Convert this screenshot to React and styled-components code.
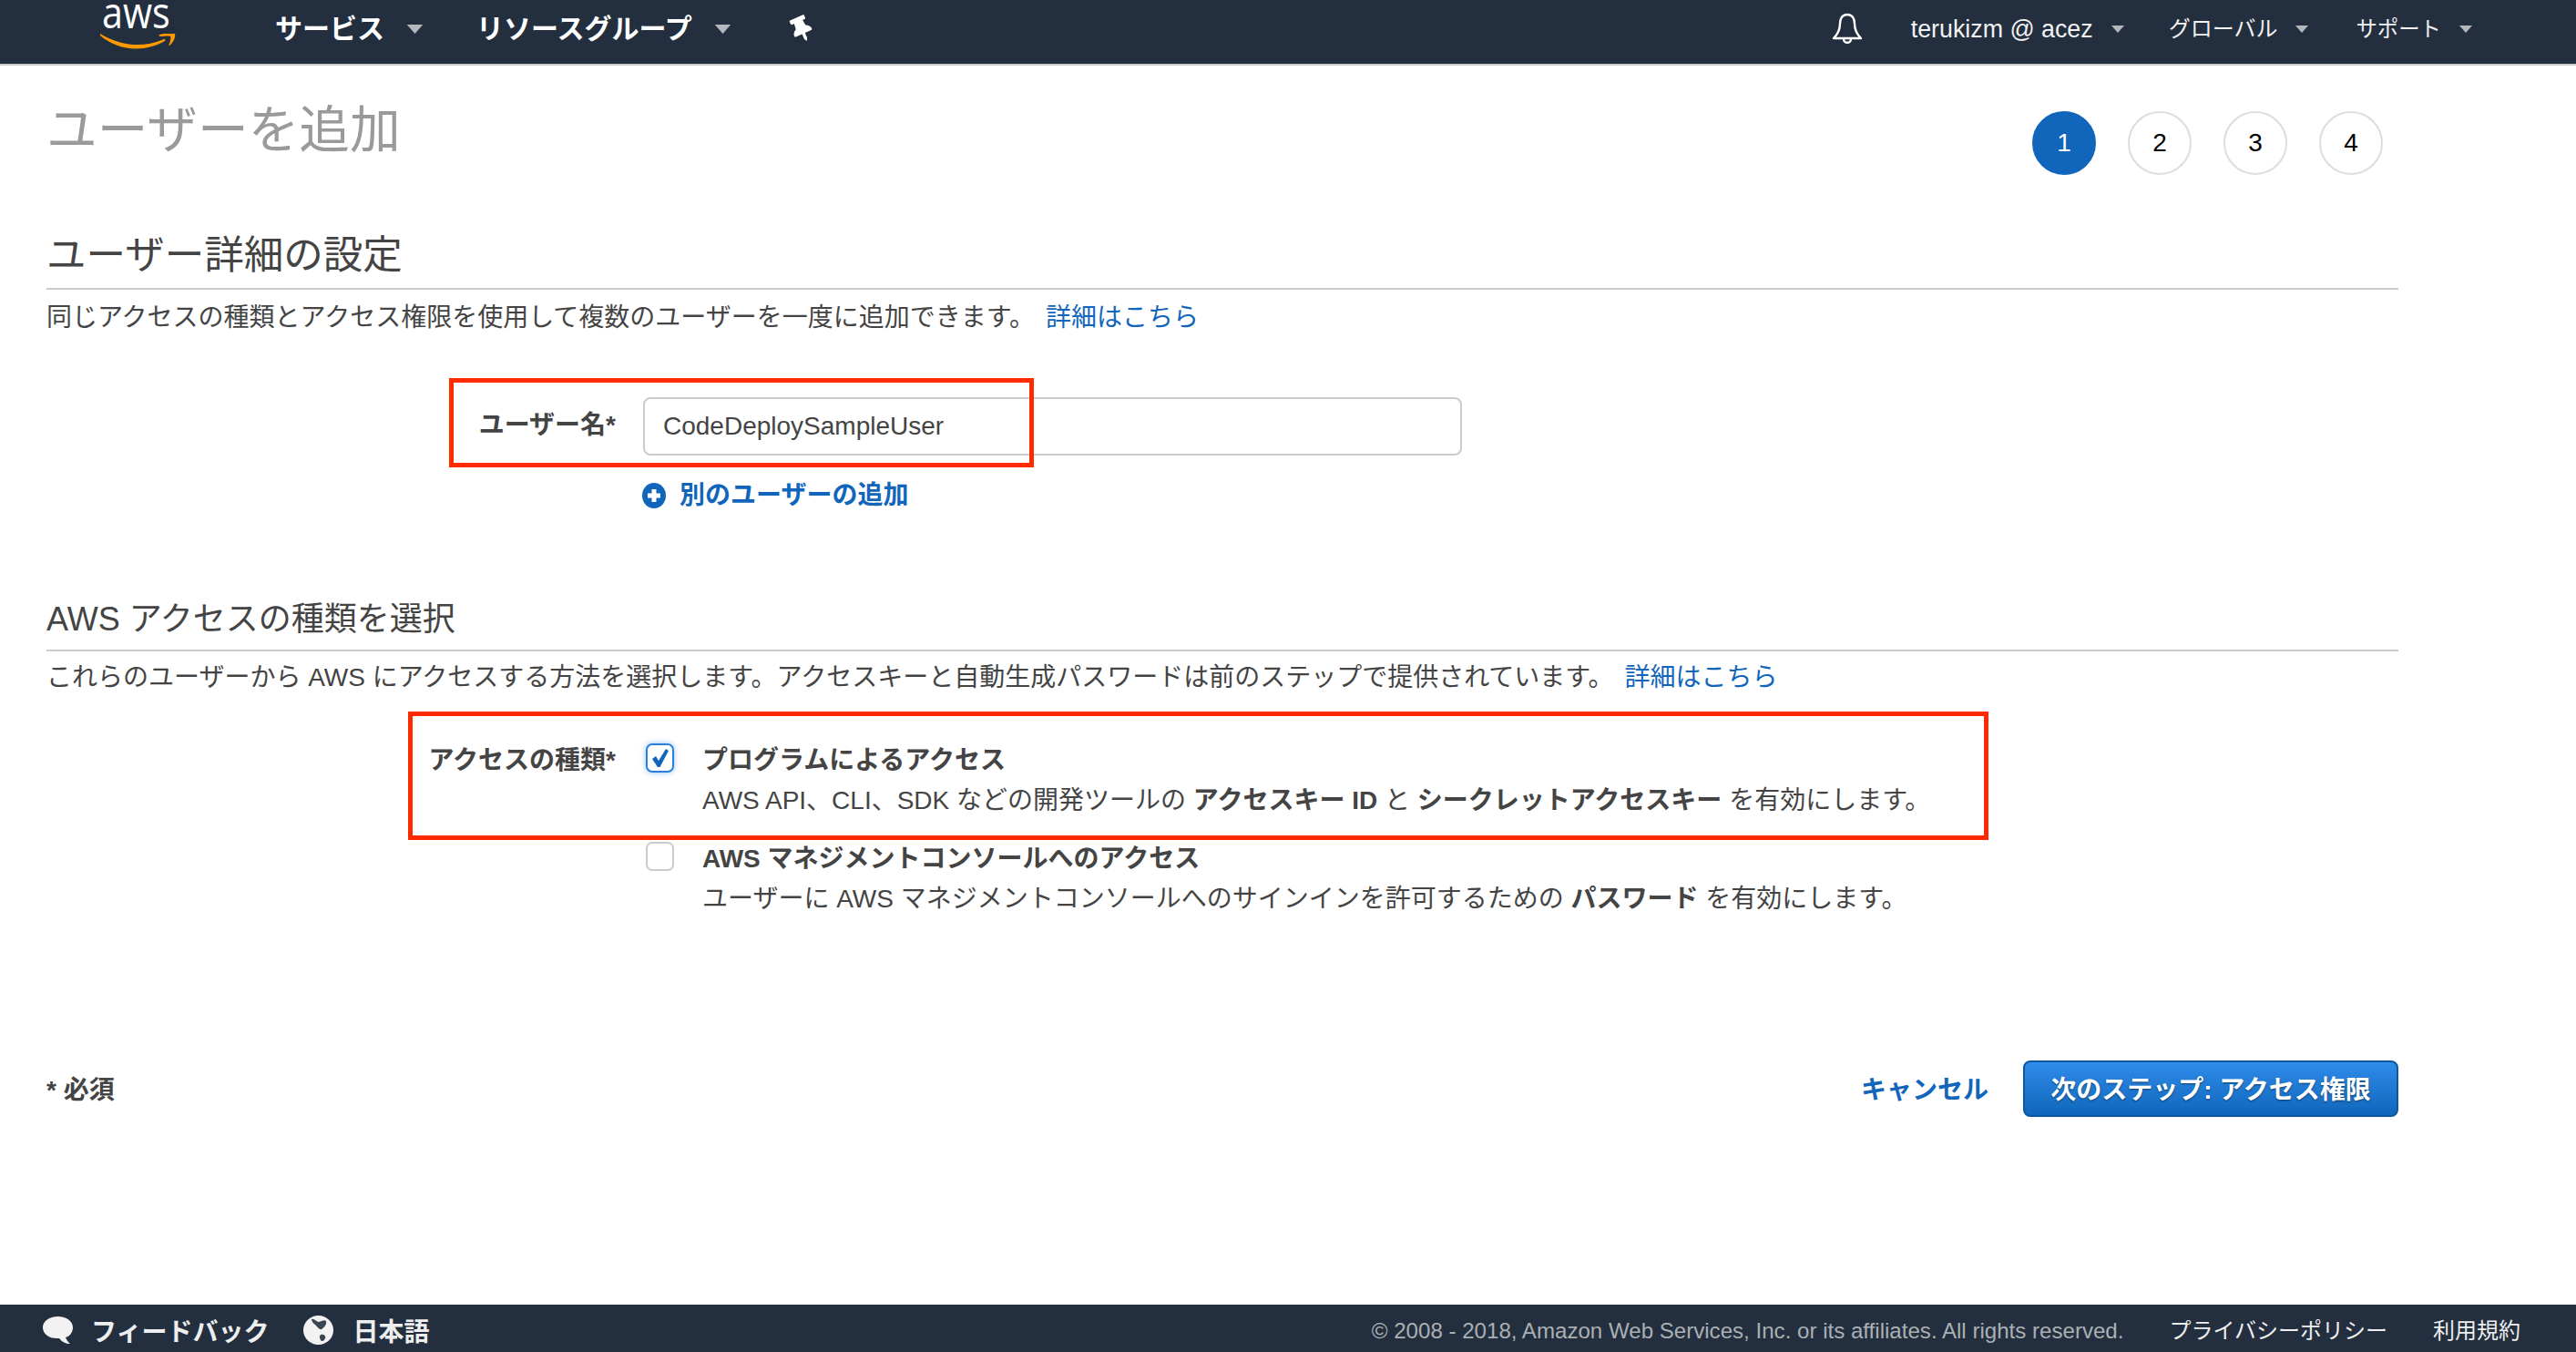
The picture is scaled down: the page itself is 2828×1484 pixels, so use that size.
import styled, { createGlobalStyle } from "styled-components";
import { FaThumbtack } from "react-icons/fa";

const GlobalStyle = createGlobalStyle`
    html, body {
        margin: 0;
        padding: 0;
        background: #fff;
    }
    body {
        font-family: "Liberation Sans", "Noto Sans CJK JP", sans-serif;
        color: #444;
    }
    * {
        box-sizing: border-box;
    }
`;

const Page = styled.div`
    display: flex;
    flex-direction: column;
    height: 1484px;
    width: 2828px;
    overflow: hidden;
`;

/* top navigation */
const NavBar = styled.header`
    display: flex;
    align-items: center;
    flex: 0 0 72px;
    height: 72px;
    padding: 0 0 6px 110px;
    background: #232f3e;
    border-bottom: 2px solid #ccc;
    color: #fff;
`;

const Logo = styled.div`
    display: flex;
    flex-direction: column;
    align-self: flex-start;
    flex: none;
    width: 84px;
    height: 70px;
    margin-right: 108px;
`;

const Wordmark = styled.span`
    display: block;
    margin-left: 2px;
    font-family: "Open Sans", sans-serif;
    font-size: 47px;
    line-height: 26px;
    color: #fff;
    transform: scaleX(0.88);
    transform-origin: left center;
`;

const Smile = styled.svg`
    display: block;
    width: 84px;
    height: 17px;
    margin-top: 11px;
`;

const MainMenu = styled.a`
    display: flex;
    align-items: center;
    gap: 24px;
    margin-right: 58px;
    font-size: 30px;
    font-weight: 700;
    line-height: 40px;
    white-space: nowrap;
`;

const Pin = styled(FaThumbtack)`
    width: 26px;
    height: 28px;
    margin-left: 6px;
    color: #fff;
    transform: rotate(-24deg);
`;

const NavRight = styled.div`
    display: flex;
    align-items: center;
    margin-left: auto;
    padding-right: 114px;
`;

const Bell = styled.svg`
    width: 34px;
    height: 36px;
    margin-right: 53px;
`;

const SideMenu = styled.a`
    display: flex;
    align-items: center;
    gap: 20px;
    margin-right: ${(p) => p.$after ?? 52}px;
    font-size: ${(p) => p.$size}px;
    line-height: 36px;
    white-space: nowrap;
    color: #f2f2f2;

    &:last-child {
        margin-right: 0;
    }
`;

const Caret = styled.svg`
    width: ${(p) => p.$w}px;
    height: ${(p) => p.$h}px;
    flex: none;
`;

/* content */
const Main = styled.main`
    display: flex;
    flex-direction: column;
    flex: 1;
    padding: 0 195px 206px 51px;
`;

const TitleRow = styled.div`
    display: flex;
    justify-content: space-between;
    height: 120px;
`;

const PageTitle = styled.h1`
    margin: 41px 0 0;
    font-size: 55.7px;
    font-weight: 400;
    line-height: 60px;
    color: #9a9a9a;
`;

const Stepper = styled.ol`
    display: flex;
    gap: 35px;
    list-style: none;
    margin: 50px 17px 0 0;
    padding: 0;
`;

const Step = styled.li`
    display: flex;
    align-items: center;
    justify-content: center;
    width: 70px;
    height: 70px;
    border-radius: 50%;
    border: 2px solid ${(p) => (p.$active ? "#1166bb" : "#ddd")};
    background: ${(p) => (p.$active ? "#1166bb" : "#fff")};
    color: ${(p) => (p.$active ? "#fff" : "#000")};
    font-size: 28px;
`;

const SectionHeading = styled.h2`
    margin: ${(p) => p.$top}px 0 0;
    padding-bottom: ${(p) => p.$pad}px;
    border-bottom: 2px solid #ccc;
    font-size: ${(p) => p.$size}px;
    font-weight: 400;
    line-height: 44px;
    color: #444;
`;

const Description = styled.p`
    margin: ${(p) => p.$top}px 0 0;
    font-size: 28px;
    line-height: 40px;
    white-space: nowrap;
`;

const TextLink = styled.a`
    color: #1166bb;
    margin-left: 12px;
`;

const FormRow = styled.div`
    position: relative;
    display: grid;
    grid-template-columns: 625px 1fr;
    column-gap: 30px;
    margin-top: ${(p) => p.$top}px;
`;

const FieldLabel = styled.label`
    font-size: 28px;
    font-weight: 700;
    line-height: 40px;
    text-align: right;
    white-space: nowrap;
    margin-top: ${(p) => p.$top}px;
`;

const TextInput = styled.input`
    width: 899px;
    height: 64px;
    padding: 0 20px;
    border: 2px solid #ccc;
    border-radius: 8px;
    background: #fff;
    font-family: inherit;
    font-size: 28px;
    color: #444;
    outline: none;
`;

const Callout = styled.div`
    position: absolute;
    left: ${(p) => p.$left}px;
    top: ${(p) => p.$top}px;
    width: ${(p) => p.$w}px;
    height: ${(p) => p.$h}px;
    border: 5px solid #ff2a00;
    pointer-events: none;
`;

const AddUser = styled.a`
    display: flex;
    align-items: center;
    gap: 15px;
    margin: 24px 0 0 654px;
    font-size: 28px;
    font-weight: 700;
    line-height: 40px;
    color: #1166bb;
`;

const PlusIcon = styled.svg`
    width: 26px;
    height: 28px;
`;

const Options = styled.div`
    display: flex;
    flex-direction: column;
    gap: 23px;
    margin-left: 3px;
`;

const Option = styled.div`
    display: flex;
    align-items: flex-start;
    gap: 31px;
`;

const CheckBox = styled.span`
    display: flex;
    align-items: center;
    justify-content: center;
    flex: none;
    width: 31px;
    height: 32px;
    border-radius: 7px;
    border: 2px solid ${(p) => (p.$checked ? "#2a7fdf" : "#ccc")};
    box-shadow: ${(p) => (p.$checked ? "0 0 6px rgba(42,127,223,.5)" : "none")};
    background: #fff;
`;

const OptionBody = styled.div`
    margin-top: -3px;
    font-size: 28px;
    line-height: 44px;
    white-space: nowrap;
`;

const OptionTitle = styled.div`
    font-weight: 700;
`;

const ActionRow = styled.div`
    display: flex;
    align-items: center;
    margin-top: auto;
    height: 62px;
`;

const Required = styled.span`
    padding-bottom: 3px;
    font-size: 28px;
    font-weight: 700;
`;

const Cancel = styled.a`
    margin-left: auto;
    margin-right: 38px;
    padding-bottom: 3px;
    font-size: 28px;
    font-weight: 700;
    color: #1166bb;
`;

const PrimaryButton = styled.button`
    width: 412px;
    height: 62px;
    padding: 0 0 2px;
    border: 2px solid #0d56a0;
    border-radius: 8px;
    background: linear-gradient(#2e8cea, #1166bb);
    color: #fff;
    font-family: inherit;
    font-size: 28px;
    font-weight: 700;
    text-shadow: 0 1px 2px rgba(0, 0, 0, 0.5);
    white-space: nowrap;
`;

/* bottom bar */
const FooterBar = styled.footer`
    display: flex;
    align-items: center;
    flex: 0 0 52px;
    padding: 0 61px 0 46px;
    background: #232f3e;
    color: #eee;
`;

const FooterItem = styled.a`
    display: flex;
    align-items: center;
    gap: ${(p) => p.$gap}px;
    margin-right: 38px;
    padding-top: 3px;
    font-size: 28px;
    font-weight: 700;
    white-space: nowrap;
`;

const FooterIcon = styled.svg`
    width: ${(p) => p.$w}px;
    height: 32px;
    flex: none;
`;

const Copyright = styled.span`
    margin-left: auto;
    margin-right: 50px;
    padding-top: 6px;
    font-size: 24.1px;
    color: #aab0b4;
    white-space: nowrap;
`;

const FooterLink = styled.a`
    margin-right: 50px;
    font-size: 24px;
    white-space: nowrap;

    &:last-child {
        margin-right: 0;
    }
`;

const Arrow = ({ w = 14, h = 8 }) => (
    <Caret $w={w} $h={h} viewBox="0 0 14 8">
        <path d="M0 0H14L7 8Z" fill="#b4b8bd" />
    </Caret>
);

const App = () => {
    return (
        <Page>
            <GlobalStyle />
            <NavBar>
                <Logo>
                    <Wordmark>aws</Wordmark>
                    <Smile viewBox="0 37 84 17">
                        <path d="M0 37C20 49 44 54 70 43C71 42 72 44 71 45C48 58 20 56 0 39Z" fill="#f90" />
                        <path d="M65 38C71 36.500 79 35.500 82 37C83 41 80 47 76 50C75 50 75 49 76 48C77 45 78 41 77 40C75 39 70 39.500 66 40C65 40 64 39 65 38Z" fill="#f90" />
                    </Smile>
                </Logo>
                <MainMenu>サービス<Arrow w={19} h={10} /></MainMenu>
                <MainMenu>リソースグループ<Arrow w={19} h={10} /></MainMenu>
                <Pin />
                <NavRight>
                    <Bell viewBox="0 0 34 36" fill="none" stroke="#fff" strokeWidth="2.400">
                        <path d="M17 2C11 2 9 7 9 12C9 20 6 24 2 28H32C28 24 25 20 25 12C25 7 23 2 17 2Z" strokeLinejoin="round" />
                        <path d="M13 29C13 34 21 34 21 29" />
                    </Bell>
                    <SideMenu $size={26.8} $after={49}>terukizm @ acez<Arrow /></SideMenu>
                    <SideMenu $size={24}>グローバル<Arrow /></SideMenu>
                    <SideMenu $size={23.4}>サポート<Arrow /></SideMenu>
                </NavRight>
            </NavBar>

            <Main>
                <TitleRow>
                    <PageTitle>ユーザーを追加</PageTitle>
                    <Stepper>
                        <Step $active>1</Step>
                        <Step>2</Step>
                        <Step>3</Step>
                        <Step>4</Step>
                    </Stepper>
                </TitleRow>

                <SectionHeading $top={66} $pad={14} $size={43.5}>ユーザー詳細の設定</SectionHeading>
                <Description $top={11}>
                    同じアクセスの種類とアクセス権限を使用して複数のユーザーを一度に追加できます。
                    <TextLink>詳細はこちら</TextLink>
                </Description>

                <FormRow $top={67}>
                    <FieldLabel $top={11}>ユーザー名*</FieldLabel>
                    <TextInput defaultValue="CodeDeploySampleUser" readOnly />
                    <Callout $left={442} $top={-21} $w={642} $h={98} />
                </FormRow>
                <AddUser>
                    <PlusIcon viewBox="0 0 26 28">
                        <ellipse cx="13" cy="14" rx="13" ry="14" fill="#1166bb" />
                        <path d="M13 7V21M6 14H20" stroke="#fff" strokeWidth="5" />
                    </PlusIcon>
                    <span>別のユーザーの追加</span>
                </AddUser>

                <SectionHeading $top={94} $pad={11} $size={36}>AWS アクセスの種類を選択</SectionHeading>
                <Description $top={9}>
                    これらのユーザーから AWS にアクセスする方法を選択します。アクセスキーと自動生成パスワードは前のステップで提供されています。
                    <TextLink>詳細はこちら</TextLink>
                </Description>

                <FormRow $top={52}>
                    <FieldLabel $top={-1}>アクセスの種類*</FieldLabel>
                    <Options>
                        <Option>
                            <CheckBox $checked>
                                <svg width="20" height="22" viewBox="0 0 20 22">
                                    <path d="M1 12L5 9L8 14L16 1L19 3L9.500 21H7Z" fill="#1166bb" />
                                </svg>
                            </CheckBox>
                            <OptionBody>
                                <OptionTitle>プログラムによるアクセス</OptionTitle>
                                AWS API、CLI、SDK などの開発ツールの <b>アクセスキー ID</b> と <b>シークレットアクセスキー</b> を有効にします。
                            </OptionBody>
                        </Option>
                        <Option>
                            <CheckBox />
                            <OptionBody>
                                <OptionTitle>AWS マネジメントコンソールへのアクセス</OptionTitle>
                                ユーザーに AWS マネジメントコンソールへのサインインを許可するための <b>パスワード</b> を有効にします。
                            </OptionBody>
                        </Option>
                    </Options>
                    <Callout $left={397} $top={-35} $w={1735} $h={141} />
                </FormRow>

                <ActionRow>
                    <Required>* 必須</Required>
                    <Cancel>キャンセル</Cancel>
                    <PrimaryButton>次のステップ: アクセス権限</PrimaryButton>
                </ActionRow>
            </Main>

            <FooterBar>
                <FooterItem $gap={19}>
                    <FooterIcon $w={35} viewBox="0 0 35 32">
                        <path d="M17.500 1C27 1 34 6 34 13C34 19 30 23 26 24C27 27 29 29 31 31C26 31 22 29 19 25C8 26 1 20 1 13C1 6 8 1 17.500 1Z" fill="#f2f2f2" />
                    </FooterIcon>
                    フィードバック
                </FooterItem>
                <FooterItem $gap={21}>
                    <FooterIcon $w={33} viewBox="0 0 33 32">
                        <ellipse cx="16.500" cy="16" rx="16.500" ry="16" fill="#f2f2f2" />
                        <path d="M9 4C12 3 14 7 17 7C20 6 23 4 25 6C26 10 23 13 20 15C18 16 16 13 14 11C12 9 9 7 9 4Z" fill="#3a4552" />
                        <path d="M19 21C22 20 25 22 24 25C23 28 20 29 19 27C18 25 17 23 19 21Z" fill="#3a4552" />
                    </FooterIcon>
                    日本語
                </FooterItem>
                <Copyright>© 2008 - 2018, Amazon Web Services, Inc. or its affiliates. All rights reserved.</Copyright>
                <FooterLink>プライバシーポリシー</FooterLink>
                <FooterLink>利用規約</FooterLink>
            </FooterBar>
        </Page>
    );
};

export default App;
